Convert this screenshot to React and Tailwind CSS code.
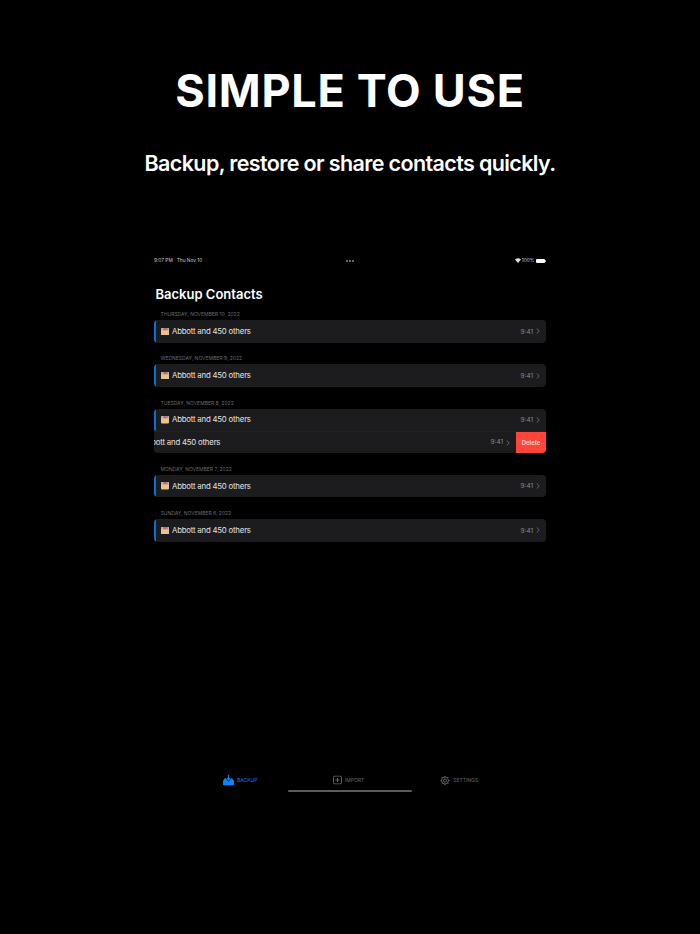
const font = { fontFamily: 'Inter, "Liberation Sans", sans-serif' };

function Box() {
  return (
    <svg width="8" height="7.5" viewBox="0 0 8 7.5" className="shrink-0">
      <rect x="0" y="0" width="8" height="7.5" rx="1" fill="#ecc28c" />
      <rect x="0" y="0" width="8" height="2.4" rx="0.8" fill="#d9a87c" />
      <rect x="2.4" y="0" width="2.6" height="2.2" fill="#a56f84" />
      <rect x="5" y="0" width="1.8" height="2.2" fill="#7f8abd" />
    </svg>
  );
}

function Chevron() {
  return (
    <svg width="4" height="6" viewBox="0 0 4 6" fill="none" stroke="#77777b" strokeWidth="0.8" className="shrink-0">
      <path d="M0.7 0.5 L3.3 3 L0.7 5.500" />
    </svg>
  );
}

function Row({ rounded = 'rounded-[4px]' }) {
  return (
    <div className={`h-[22.5px] bg-[#1c1c1e] ${rounded} flex items-center pr-[6px] relative overflow-hidden`}>
      <div className="w-[2px] self-stretch bg-[#0a6fd8] rounded-l-[2px]" />
      <div className="ml-[5px] flex"><Box /></div>
      <span className="ml-[3px] mt-[1px] text-[7.8px] tracking-[-0.2px] text-[#e0e0e2] leading-none">Abbott and 450 others</span>
      <span className="ml-auto mt-[1px] text-[6.4px] text-[#8a8a8e] leading-none">9:41</span>
      <div className="ml-[3px] flex"><Chevron /></div>
    </div>
  );
}

function SwipedRow() {
  return (
    <div className="h-[22px] bg-[#1c1c1e] rounded-b-[4px] flex items-center relative overflow-hidden border-t border-[#212123]">
      <span className="ml-[-12.5px] text-[7.8px] tracking-[-0.2px] text-[#e0e0e2] leading-none">Abbott and 450 others</span>
      <span className="ml-auto text-[6.4px] text-[#8a8a8e] leading-none">9:41</span>
      <div className="ml-[3px] mr-[6px] flex"><Chevron /></div>
      <div className="w-[30px] self-stretch bg-[#ff453a] flex items-center justify-center text-[6px] font-semibold text-[#f5d8d6]">Delete</div>
    </div>
  );
}

function Section({ date, children }) {
  return (
    <div className="flex flex-col">
      <div className="h-[10px] pl-[6.5px] text-[5px] leading-[9px] text-[#6a6a6e]">{date}</div>
      {children}
    </div>
  );
}

export default function App() {
  return (
    <div style={font} className="w-[700px] h-[934px] bg-black overflow-hidden flex flex-col items-center">
      <h1 className="mt-[62px] text-[45px] leading-[58px] font-bold tracking-[0.7px] text-white text-center">SIMPLE TO USE</h1>
      <h2 className="mt-[29px] text-[21.5px] leading-[28px] font-semibold tracking-[-0.62px] text-white text-center">Backup, restore or share contacts quickly.</h2>
      <div className="w-[392px] mt-[79.5px] flex flex-col">
        <div className="h-[8px] flex items-center text-[4.8px] text-[#c8c8c8] leading-none">
          <div className="flex-1 flex items-center">
            <span>9:07 PM</span>
            <span className="ml-[4px]">Thu Nov 10</span>
          </div>
          <div className="flex justify-center gap-[1px]">
            <span className="w-[2px] h-[2px] rounded-full bg-[#8a8a8a]" />
            <span className="w-[2px] h-[2px] rounded-full bg-[#8a8a8a]" />
            <span className="w-[2px] h-[2px] rounded-full bg-[#8a8a8a]" />
          </div>
          <div className="flex-1 flex items-center justify-end">
            <svg width="6" height="5" viewBox="0 0 6 5" fill="#ddd"><path d="M0 1.600 Q3 -1 6 1.600 L3 5 Z" /></svg>
            <span className="ml-[1px]">100%</span>
            <span className="ml-[1.500px] w-[9px] h-[4px] rounded-[1px] bg-white" />
            <span className="w-[0.5px] h-[2px] bg-[#aaa] mr-[0.5px]" />
          </div>
        </div>
        <div className="mt-[21.5px] pl-[1.5px] text-[13px] leading-[17px] font-semibold text-white">Backup Contacts</div>
        <div className="mt-[7px] flex flex-col gap-[11.8px]">
          <Section date="THURSDAY, NOVEMBER 10, 2022"><Row /></Section>
          <Section date="WEDNESDAY, NOVEMBER 9, 2022"><Row /></Section>
          <Section date="TUESDAY, NOVEMBER 8, 2022">
            <Row rounded="rounded-t-[4px]" />
            <SwipedRow />
          </Section>
          <Section date="MONDAY, NOVEMBER 7, 2022"><Row /></Section>
          <Section date="SUNDAY, NOVEMBER 6, 2022"><Row /></Section>
        </div>
      </div>
      <div className="mt-auto mb-[142.5px] w-[392px] flex flex-col items-center">
        <div className="w-full h-[14px] flex items-center text-[5px] leading-none text-[#66666a] -translate-y-[0.5px]">
          <div className="ml-[69px] flex items-center text-[#0a7ae8]">
            <svg width="11" height="11" viewBox="0 0 12 12">
              <path d="M0 7 L2 4 H10 L12 7 V10.500 Q12 12 10.500 12 H1.500 Q0 12 0 10.500 Z" fill="#0a84ff" />
              <path d="M5 0 H7 V3.500 H9 L6 7.500 L3 3.500 H5 Z" fill="#0a84ff" stroke="#000" strokeWidth="0.7" />
            </svg>
            <span className="ml-[3px]">BACKUP</span>
          </div>
          <div className="ml-[75.5px] flex items-center">
            <svg width="9" height="9" viewBox="0 0 9 9" fill="none" stroke="#77777b" strokeWidth="0.8">
              <rect x="0.5" y="0.5" width="8" height="8" rx="1.500" />
              <path d="M4.500 2.500 V6.500 M2.500 4.500 H6.500" />
            </svg>
            <span className="ml-[3px]">IMPORT</span>
          </div>
          <div className="ml-[75.5px] flex items-center">
            <svg width="10" height="10" viewBox="0 0 20 20" fill="none" stroke="#77777b">
              <circle cx="10" cy="10" r="7" strokeWidth="1.5" />
              <circle cx="10" cy="10" r="3" strokeWidth="1.5" />
              <path d="M10 1 V3 M10 17 V19 M1 10 H3 M17 10 H19 M3.600 3.600 L5 5 M15 15 L16.400 16.400 M16.400 3.600 L15 5 M5 15 L3.600 16.400" strokeWidth="2" />
            </svg>
            <span className="ml-[3.5px]">SETTINGS</span>
          </div>
        </div>
        <div className="mt-[2px] w-[124px] h-[2px] rounded-full bg-[#5c5c5e]" />
      </div>
    </div>
  );
}
